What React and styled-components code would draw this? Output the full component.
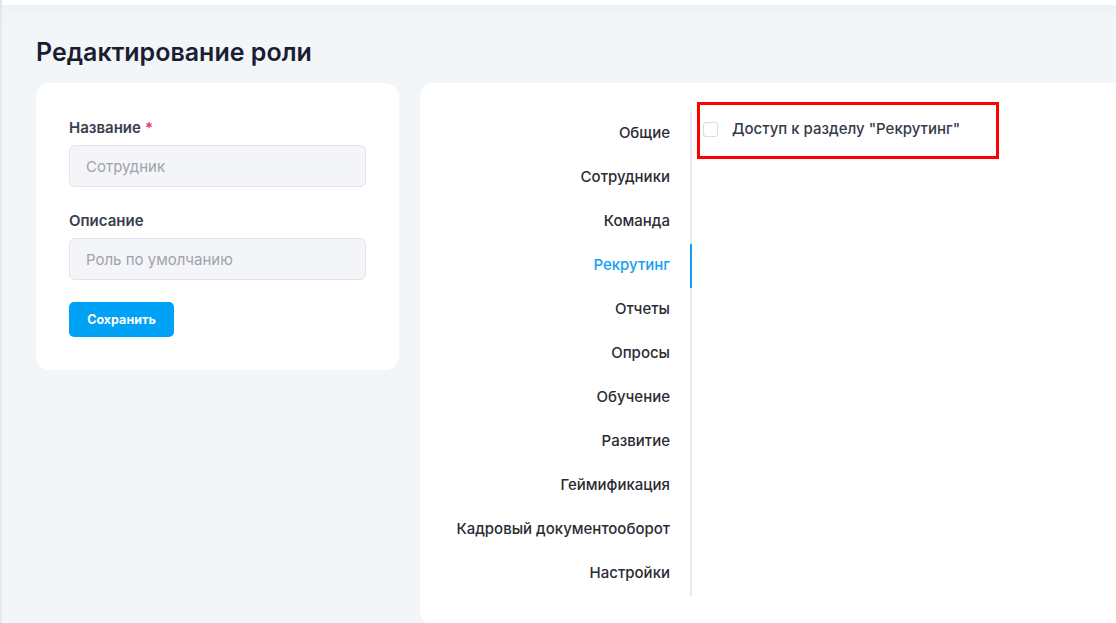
import React, { useState } from 'react';
import styled, { createGlobalStyle } from 'styled-components';

const GlobalStyle = createGlobalStyle`
  * { box-sizing: border-box; }
  body {
    margin: 0;
    font-family: Inter, "Noto Sans", "Liberation Sans", sans-serif;
    background: #f3f6f9;
    overflow: hidden;
  }
`;

const Page = styled.div`
  min-height: 623px;
  background: #f3f6f9;
  border-left: 2px solid #e3e8f1;
`;

const TopBar = styled.div`
  height: 5px;
  background: #ffffff;
  box-shadow: 0 4px 12px rgba(200, 205, 220, 0.35);
`;

const Title = styled.h1`
  margin: 0;
  padding: 32px 0 15px 34px;
  font-size: 25px;
  line-height: 31px;
  font-weight: 600;
  color: #1b1e33;
`;

const Content = styled.div`
  display: flex;
  gap: 21px;
  align-items: flex-start;
  padding-left: 34px;
`;

const FormCard = styled.div`
  width: 363px;
  background: #ffffff;
  border-radius: 14px;
  padding: 36px 33px 33px;
  display: flex;
  flex-direction: column;
`;

const Label = styled.label`
  font-size: 15px;
  font-weight: 600;
  color: #3a3d4e;
  line-height: 18px;
  margin-bottom: 8px;
`;

const Star = styled.span`
  color: #e5365a;
  margin-left: 4px;
`;

const Input = styled.input`
  width: 297px;
  height: 42px;
  background: #f4f5f9;
  border: 1px solid #e2e4ea;
  border-radius: 6px;
  padding: 0 16px;
  font-family: inherit;
  font-size: 15px;
  color: #3a3d4e;
  margin-bottom: ${(p) => p.$gap}px;
  outline: none;
  &::placeholder { color: #a0a2ab; }
`;

const SaveButton = styled.button`
  width: 105px;
  height: 35px;
  background: #00a2f5;
  color: #ffffff;
  border: none;
  border-radius: 5px;
  font-family: inherit;
  font-size: 12.5px;
  font-weight: 700;
  cursor: pointer;
`;

const RoleCard = styled.div`
  flex: 1;
  height: 542px;
  background: #ffffff;
  border-radius: 14px 0 0 14px;
  padding-top: 19px;
  display: flex;
`;

const Tabs = styled.div`
  width: 272px;
  margin-top: 10px;
  align-self: flex-start;
  border-right: 2px solid #e6e9ef;
  display: flex;
  flex-direction: column;
`;

const Tab = styled.div`
  height: 44px;
  display: flex;
  align-items: center;
  justify-content: flex-end;
  padding: 0 20px 4px 0;
  margin-right: -2px;
  font-size: 15px;
  font-weight: 500;
  color: ${(p) => (p.$active ? '#12a1f2' : '#2a2c34')};
  border-right: 2px solid ${(p) => (p.$active ? '#12a1f2' : 'transparent')};
  cursor: pointer;
`;

const Panel = styled.div`
  padding-left: 5px;
`;

const Highlight = styled.div`
  width: 302px;
  height: 57px;
  border: 3px solid #ff0000;
  display: flex;
  align-items: center;
  padding-left: 3px;
  gap: 14px;
`;

const Check = styled.span`
  width: 15px;
  height: 15px;
  border: 1px solid #d9dce3;
  border-radius: 3px;
  background: #ffffff;
  margin-top: -2px;
`;

const CheckText = styled.span`
  font-size: 15px;
  font-weight: 500;
  color: #363949;
  margin-top: -4px;
`;

const tabs = [
  'Общие',
  'Сотрудники',
  'Команда',
  'Рекрутинг',
  'Отчеты',
  'Опросы',
  'Обучение',
  'Развитие',
  'Геймификация',
  'Кадровый документооборот',
  'Настройки',
];

const App = () => {
  const [active, setActive] = useState('Рекрутинг');

  return (
    <>
      <GlobalStyle />
      <Page>
        <TopBar />
        <Title>Редактирование роли</Title>
        <Content>
          <FormCard>
            <Label>Название<Star>*</Star></Label>
            <Input placeholder="Сотрудник" $gap={25} />
            <Label>Описание</Label>
            <Input placeholder="Роль по умолчанию" $gap={22} />
            <SaveButton type="button">Сохранить</SaveButton>
          </FormCard>
          <RoleCard>
            <Tabs>
              {tabs.map((t) => (
                <Tab key={t} $active={t === active} onClick={() => setActive(t)}>
                  {t}
                </Tab>
              ))}
            </Tabs>
            <Panel>
              <Highlight>
                <Check />
                <CheckText>Доступ к разделу "{active}"</CheckText>
              </Highlight>
            </Panel>
          </RoleCard>
        </Content>
      </Page>
    </>
  );
};

export default App;
